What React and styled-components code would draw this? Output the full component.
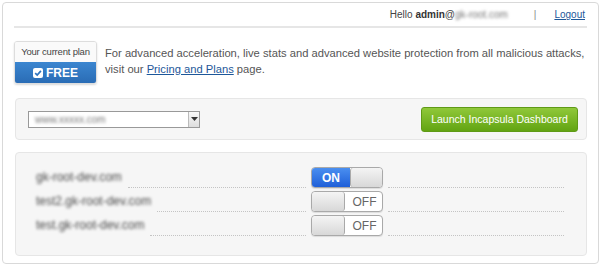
import React from 'react';
import styled, { createGlobalStyle } from 'styled-components';

const GlobalStyle = createGlobalStyle`
	html, body { margin: 0; padding: 0; background: #fff; }
	body { font-family: "Liberation Sans", Arial, sans-serif; color: #555; }
`;

const sites = [
	{ name: 'gk-root-dev.com', on: true },
	{ name: 'test2.gk-root-dev.com', on: false },
	{ name: 'test.gk-root-dev.com', on: false }
];

export default function App() {
	return (
		<>
			<GlobalStyle />
			<Card>
				{/* 상단 사용자 */}
				<TopBar>
					<span>Hello <b>admin</b>@<Blur>gk-root.com</Blur></span>
					<Sep>|</Sep>
					<Link href="#">Logout</Link>
				</TopBar>

				{/* 플랜 */}
				<PlanRow>
					<PlanBox>
						<PlanTitle>Your current plan</PlanTitle>
						<PlanName>
							<CheckIcon viewBox="0 0 10 10">
								<rect x="0" y="0" width="10" height="10" rx="2" fill="#fff" />
								<path d="M2.2 5.2 L4.2 7.1 L7.9 2.9" stroke="#2f74bf" strokeWidth="1.7" fill="none" />
							</CheckIcon>
							FREE
						</PlanName>
					</PlanBox>
					<PlanText>
						For advanced acceleration, live stats and advanced website protection from all malicious attacks,<br />
						visit our <Link href="#">Pricing and Plans</Link> page.
					</PlanText>
				</PlanRow>

				{/* 사이트 선택 */}
				<Panel>
					<SelectBox>
						<SelectValue><Blur>www.xxxxx.com</Blur></SelectValue>
						<SelectArrow>
							<svg width="7" height="4" viewBox="0 0 7 4"><path d="M0 0 H7 L3.5 4 Z" fill="#333" /></svg>
						</SelectArrow>
					</SelectBox>
					<LaunchButton>Launch Incapsula Dashboard</LaunchButton>
				</Panel>

				{/* 사이트 목록 */}
				<ListPanel>
					{sites.map((s) => (
						<SiteRow key={s.name}>
							<SiteName><Blur $dark>{s.name}</Blur></SiteName>
							<Dots />
							<Toggle>
								{s.on ? (
									<>
										<ToggleOn>ON</ToggleOn>
										<Knob />
									</>
								) : (
									<>
										<Knob $left />
										<ToggleOff>OFF</ToggleOff>
									</>
								)}
							</Toggle>
							<Dots $tail />
						</SiteRow>
					))}
				</ListPanel>
			</Card>
		</>
	);
}

const Card = styled.div`
	margin: 2px 3px 0 2px;
	height: 262px;
	box-sizing: border-box;
	border: 1px solid #d9d9d9;
	border-radius: 4px;
	padding: 0 11px 0 11px;
	background: #fff;
`;

const TopBar = styled.div`
	display: flex;
	justify-content: flex-end;
	align-items: center;
	height: 23px;
	border-bottom: 2px solid #e6e6e6;
	font-size: 10px;
	color: #444;
	padding-right: 2px;
	b { font-weight: bold; color: #333; }
`;

const Sep = styled.span`
	margin: 0 18px 0 26px;
	color: #888;
`;

const Link = styled.a`
	color: #1d5799;
	text-decoration: underline;
`;

const Blur = styled.span`
	filter: blur(${(p) => (p.$dark ? '1.5px' : '1.7px')});
	color: ${(p) => (p.$dark ? '#4a4a4a' : '#777')};
`;

const PlanRow = styled.div`
	display: flex;
	align-items: flex-start;
	padding-top: 13px;
	height: 67px;
	box-sizing: border-box;
`;

const PlanBox = styled.div`
	width: 81px;
	border: 1px solid #ddd;
	border-radius: 3px;
	overflow: hidden;
	box-shadow: 0 1px 2px rgba(0, 0, 0, 0.15);
`;

const PlanTitle = styled.div`
	height: 20px;
	line-height: 20px;
	text-align: center;
	font-size: 9.5px;
	letter-spacing: -0.2px;
	color: #444;
	background: #fafafa;
`;

const PlanName = styled.div`
	display: flex;
	align-items: center;
	justify-content: center;
	gap: 3px;
	height: 21px;
	background: linear-gradient(#3b86d0, #2a6cb5);
	color: #fff;
	font-weight: bold;
	font-size: 12px;
`;

const CheckIcon = styled.svg`
	width: 10px;
	height: 10px;
`;

const PlanText = styled.p`
	margin: 4px 0 0 8px;
	font-size: 11.2px;
	line-height: 16px;
	color: #555;
`;

const Panel = styled.div`
	display: flex;
	align-items: center;
	justify-content: space-between;
	height: 42px;
	box-sizing: border-box;
	margin: 3px 0 0 1px;
	padding: 0 8px 0 12px;
	background: #f6f6f6;
	border: 1px solid #e6e6e6;
	border-radius: 4px;
`;

const SelectBox = styled.div`
	display: flex;
	width: 172px;
	height: 17px;
	box-sizing: border-box;
	border: 1px solid #999;
	background: #fff;
`;

const SelectValue = styled.div`
	flex: 1;
	font-size: 10px;
	line-height: 15px;
	padding-left: 6px;
`;

const SelectArrow = styled.div`
	width: 10px;
	display: flex;
	align-items: center;
	justify-content: center;
	border-left: 1px solid #bbb;
	background: linear-gradient(#f8f8f8, #ddd);
`;

const LaunchButton = styled.button`
	width: 157px;
	height: 25px;
	border: 1px solid #5f9a16;
	border-radius: 3px;
	background: linear-gradient(#90c83a, #62a412);
	color: #fff;
	font-family: "Liberation Sans", Arial, sans-serif;
	font-size: 10.5px;
	padding: 0;
	cursor: pointer;
`;

const ListPanel = styled.div`
	margin: 12px 0 0 1px;
	height: 104px;
	box-sizing: border-box;
	padding: 14px 22px 0 20px;
	background: #f6f6f6;
	border: 1px solid #e6e6e6;
	border-radius: 4px;
`;

const SiteRow = styled.div`
	display: flex;
	align-items: flex-end;
	height: 21px;
	margin-bottom: 3px;
`;

const SiteName = styled.div`
	font-size: 12px;
	align-self: center;
	margin-bottom: 2px;
	padding-right: 6px;
`;

const Dots = styled.div`
	flex: ${(p) => (p.$tail ? '0 0 176px' : '1')};
	margin: ${(p) => (p.$tail ? '0 0 0 5px' : '0 5px 0 0')};
	border-bottom: 1px dotted #c4c4c4;
	height: 0;
`;

const Toggle = styled.div`
	display: flex;
	width: 72px;
	height: 21px;
	box-sizing: border-box;
	border: 1px solid #a9a9a9;
	border-radius: 4px;
	overflow: hidden;
	background: #fff;
	box-shadow: 0 1px 1px rgba(0, 0, 0, 0.1);
`;

const ToggleOn = styled.div`
	width: 38px;
	display: flex;
	align-items: center;
	justify-content: center;
	background: linear-gradient(#4a8ff0, #1f5fd8);
	color: #fff;
	font-weight: bold;
	font-size: 12px;
`;

const ToggleOff = styled.div`
	flex: 1;
	display: flex;
	align-items: center;
	justify-content: center;
	color: #666;
	font-size: 12px;
	padding-left: 2px;
`;

const Knob = styled.div`
	${(p) => (p.$left ? 'width: 32px;' : 'flex: 1;')}
	background: linear-gradient(#f4f4f4, #d8d8d8);
	${(p) => (p.$left ? 'border-right: 1px solid #a9a9a9;' : 'border-left: 1px solid #a9a9a9;')}
	border-radius: 3px;
`;
